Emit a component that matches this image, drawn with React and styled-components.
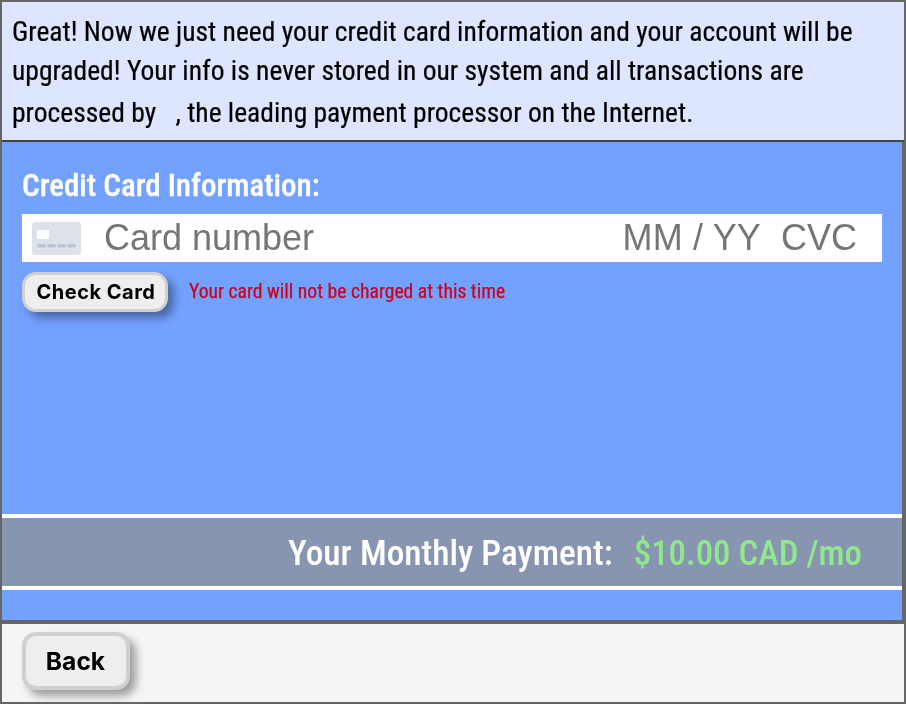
import React from "react";
import styled, { createGlobalStyle } from "styled-components";

const Global = createGlobalStyle`
  html, body { margin: 0; padding: 0; }
  * { box-sizing: border-box; }
`;
const Frame = styled.div`
  width: 906px; height: 704px; border: 2px solid #666;
  display: flex; flex-direction: column; overflow: hidden;
  font-family: "Roboto Condensed", Roboto, sans-serif;
  will-change: transform;
`;
const Intro = styled.div`
  height: 140px; background: #dde5ff; border-bottom: 2px solid #444;
  padding: 11px 10px 0; flex: none;
`;
const IntroText = styled.p`
  margin: 0; font-size: 27.55px; line-height: 38.5px; color: #000; font-stretch: condensed;
  -webkit-text-stroke: 0.2px #000;
`;
const LogoSlot = styled.span`
  display: inline-block; width: 13px; height: 34px; vertical-align: -2.5px;
`;
const Main = styled.div`
  flex: 1; background: #73a1ff; display: flex; flex-direction: column; padding-top: 26px;
  border-right: 2px solid #666;
`;
const Heading = styled.h2`
  margin: 0 0 0 20px; font-size: 31px; line-height: 36px; font-weight: 500; color: #fff; font-stretch: condensed;
  -webkit-text-stroke: 0.3px #fff;
`;
const CardField = styled.div`
  margin: 10px 20px 0 20px; height: 48px; background: #fff; display: flex; align-items: center;
  padding: 0 25px 0 10px; font-family: "Liberation Sans", Arial, sans-serif; font-size: 36px; color: #757575;
`;
const CardIcon = styled.svg`
  width: 49px; height: 33px; margin-right: 23px; flex: none;
`;
const CardNumber = styled.span`flex: 1;`;
const Expiry = styled.span`margin-right: 20px; letter-spacing: 0.15px;`;
const CheckRow = styled.div`
  margin: 10px 0 0 20px; display: flex; align-items: center; gap: 21px;
`;
const Button = styled.button`
  font-family: Inter, "Liberation Sans", sans-serif; font-weight: 700; color: #000;
  background: #eee; border: 3px solid #d0d0d0;
  box-shadow: 6px 6px 9px rgba(0,0,0,.36);
  padding: 0;
`;
const CheckButton = styled(Button)`
  width: 146px; height: 40px; border-radius: 14px; font-size: 20px; letter-spacing: 0.5px; padding-left: 2px;
`;
const Notice = styled.span`
  font-size: 19.65px; color: #d0021b; font-stretch: condensed; position: relative; top: -1px;
  -webkit-text-stroke: 0.25px #d0021b;
`;
const Spacer = styled.div`flex: 1;`;
const PaymentBar = styled.div`
  height: 76px; background: #8895b0; border-top: 4px solid #fff; border-bottom: 4px solid #fff;
  display: flex; align-items: center; justify-content: flex-end; padding-right: 40px; gap: 21px;
  font-size: 35.3px; font-weight: 500; font-stretch: condensed; margin-bottom: 30px; padding-top: 2px;
`;
const PaymentLabel = styled.span`color: #fff;`;
const PaymentValue = styled.span`color: #90e88c; font-size: 34.8px;`;
const Footer = styled.div`
  height: 82px; flex: none; background: #f5f5f5; border-top: 4px solid #666; padding: 8px 0 0 20px;
`;
const BackButton = styled(Button)`
  width: 108px; height: 58px; border-radius: 14px; font-size: 24.6px; border-width: 4px; padding-right: 1px;
`;

export default function App() {
  return (
    <Frame>
      <Global />
      <Intro>
        <IntroText>
          Great! Now we just need your credit card information and your account will be upgraded! Your info is never stored in our system and all transactions are processed by <LogoSlot />, the leading payment processor on the Internet.
        </IntroText>
      </Intro>
      <Main>
        <Heading>Credit Card Information:</Heading>
        <CardField>
          <CardIcon viewBox="0 0 49 33">
            <rect width="49" height="33" rx="3" fill="#dde1ea" />
            <rect x="5" y="8" width="12" height="9" rx="1" fill="#fff" />
            <g fill="#bcc3d2">
              <rect x="5" y="22" width="9" height="3.5" rx="1.75" />
              <rect x="15" y="22" width="9" height="3.5" rx="1.75" />
              <rect x="25" y="22" width="9" height="3.5" rx="1.75" />
              <rect x="35" y="22" width="9" height="3.5" rx="1.75" />
            </g>
          </CardIcon>
          <CardNumber>Card number</CardNumber>
          <Expiry>MM / YY</Expiry>
          <span>CVC</span>
        </CardField>
        <CheckRow>
          <CheckButton>Check Card</CheckButton>
          <Notice>Your card will not be charged at this time</Notice>
        </CheckRow>
        <Spacer />
        <PaymentBar>
          <PaymentLabel>Your Monthly Payment:</PaymentLabel>
          <PaymentValue>$10.00 CAD /mo</PaymentValue>
        </PaymentBar>
      </Main>
      <Footer>
        <BackButton>Back</BackButton>
      </Footer>
    </Frame>
  );
}
